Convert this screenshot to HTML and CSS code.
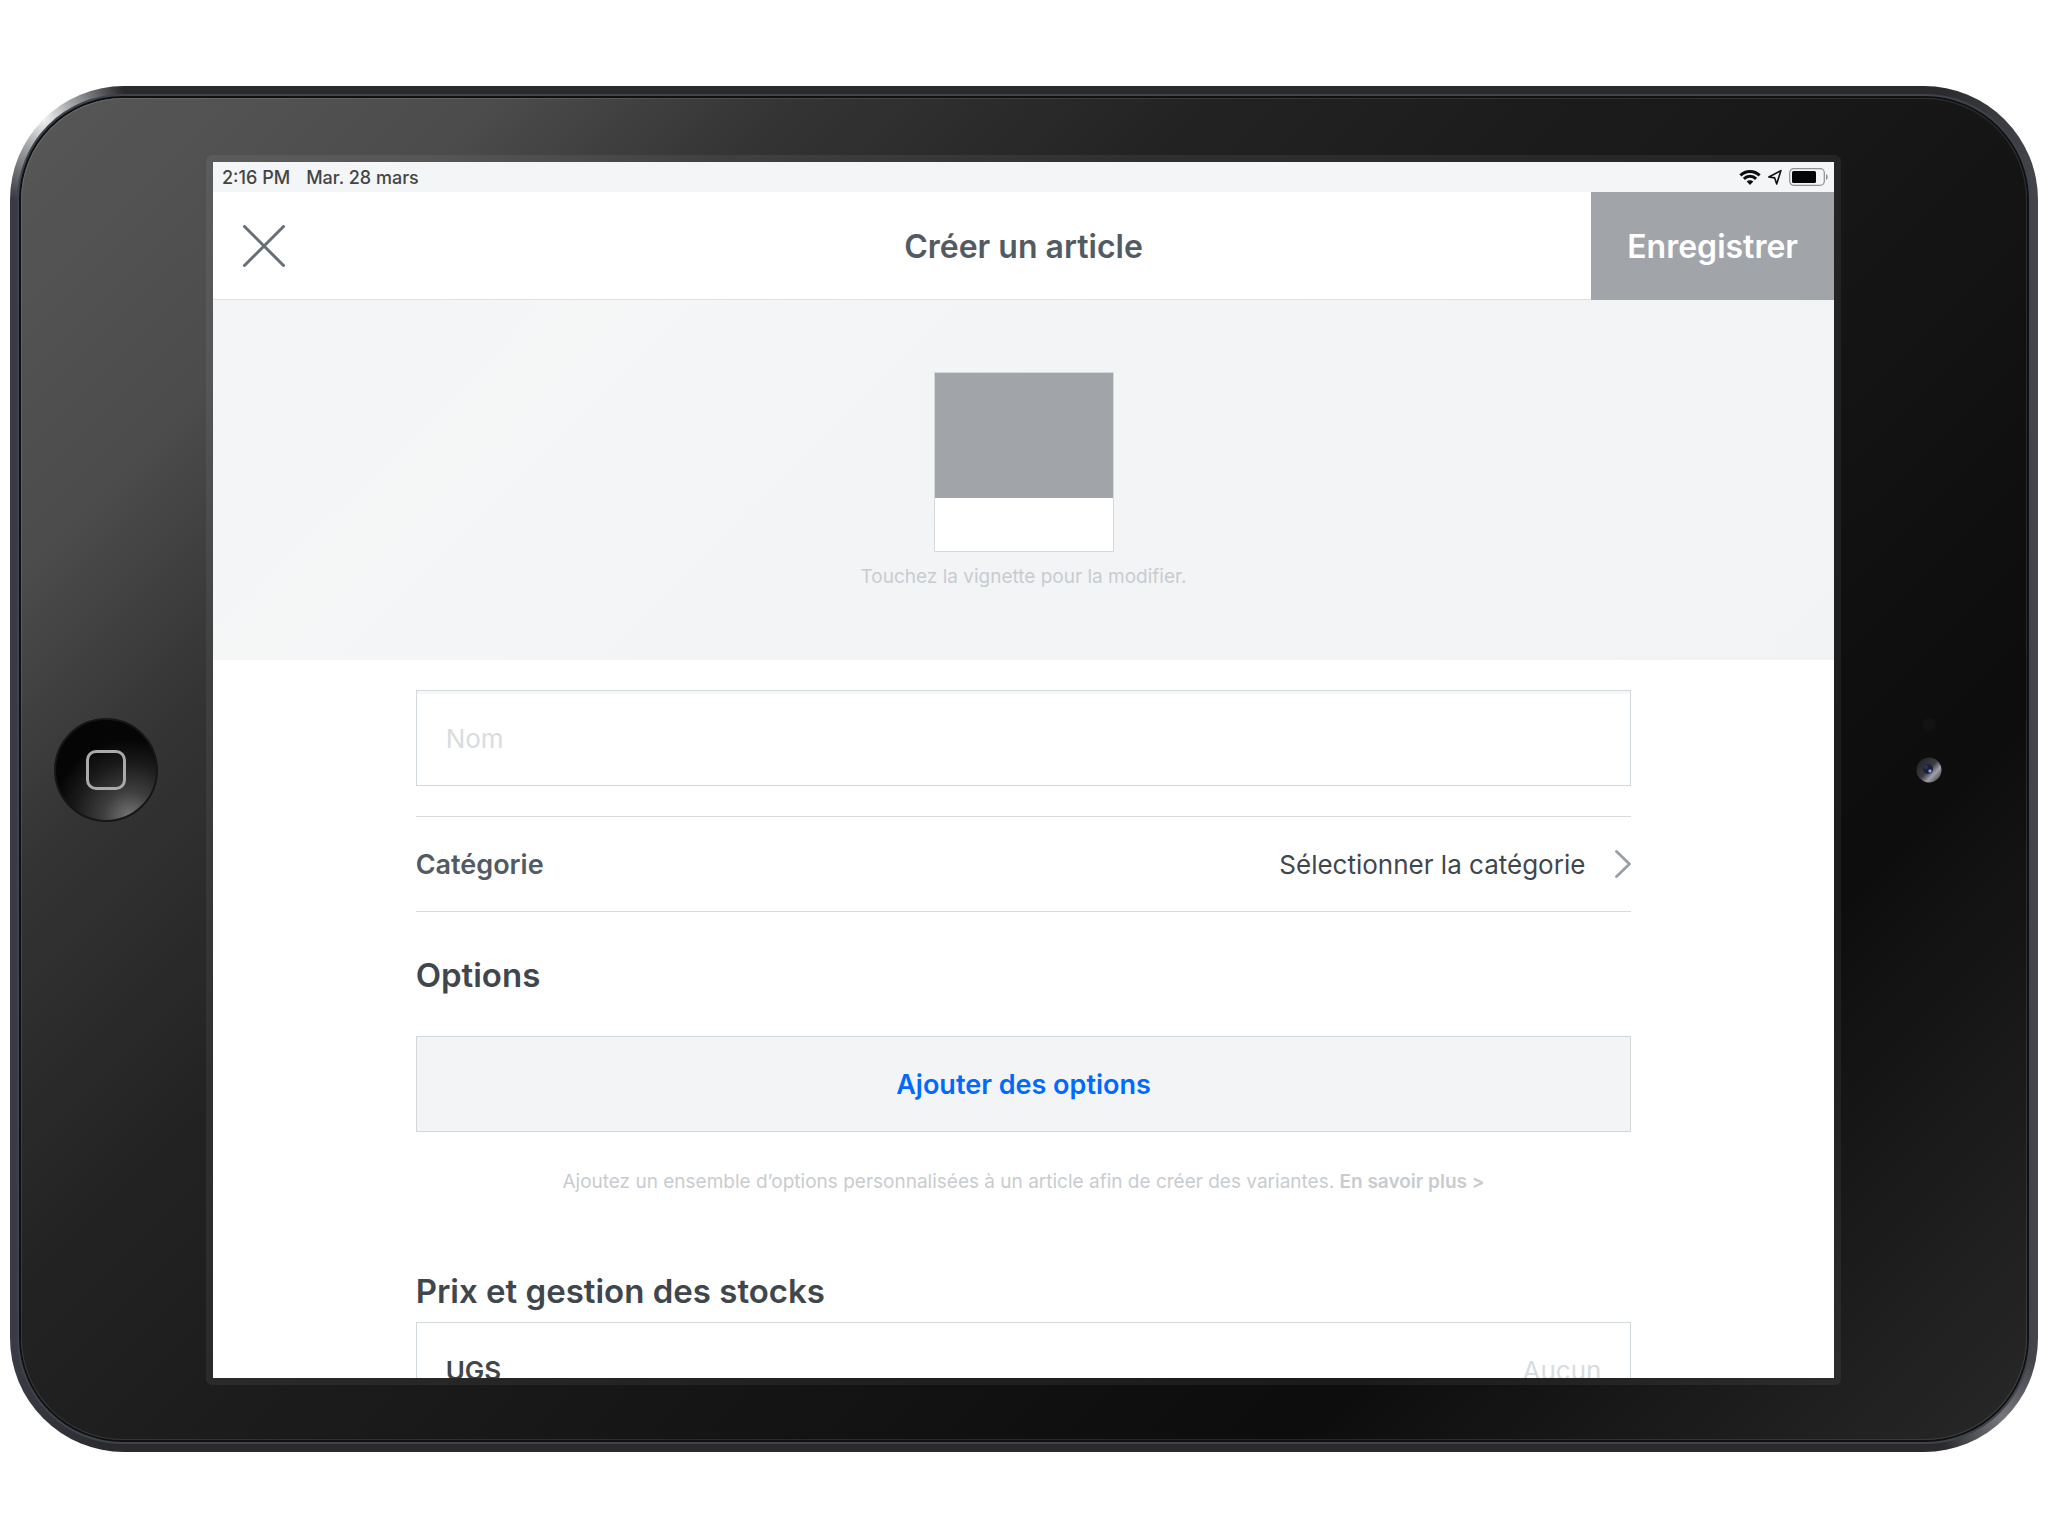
FILE: index.html
```html
<!DOCTYPE html>
<html lang="fr">

<head>
    <meta charset="UTF-8">
    <meta name="viewport" content="width=device-width, initial-scale=1.0">
    <title>Créer un article</title>
    <link rel="stylesheet" href="styles.css">
</head>

<body>

    <div class="tablet">
        <div class="bezel">
            <div class="side side-left">
                <button type="button" class="home" aria-label="Accueil"><span class="home-mark"></span></button>
            </div>

            <div class="screen">
                <div class="status-bar">
                    <div class="status-group">
                        <span>2:16 PM</span>
                        <span>Mar. 28 mars</span>
                    </div>
                    <div class="status-icons">
                        <svg width="22" height="16" viewBox="0 0 22 16" fill="none" stroke="#0b0f10" stroke-width="3">
                            <path d="M1.4 6.4a13.6 13.6 0 0 1 19.2 0" />
                            <path d="M4.9 9.9a8.6 8.6 0 0 1 12.2 0" />
                            <path d="M11 16l-3.3-3.4a4.7 4.7 0 0 1 6.6 0z" fill="#0b0f10" stroke="none" />
                        </svg>
                        <svg width="14" height="16" viewBox="0 0 14 16" fill="none" stroke="#0b0f10" stroke-width="1.6" stroke-linejoin="round">
                            <path d="M12.9 1.6L.9 8l5.8.9 2 6z" />
                        </svg>
                        <svg width="39" height="18" viewBox="0 0 39 18">
                            <rect x=".7" y=".7" width="34.6" height="16.6" rx="4" fill="none" stroke="#8e9193" stroke-width="1.2" />
                            <rect x="3" y="3" width="24" height="12" rx="1.5" fill="#050606" />
                            <path d="M37 6c2.2 1 2.2 5 0 6z" fill="#8e9193" />
                        </svg>
                    </div>
                </div>

                <header class="header">
                    <button type="button" class="close" aria-label="Fermer">
                        <svg width="42" height="42" viewBox="0 0 42 42" fill="none" stroke="#666f76" stroke-width="3" stroke-linecap="round">
                            <path d="M1.5 1.5l39 39M40.5 1.5l-39 39" />
                        </svg>
                    </button>
                    <h1 class="title">Créer un article</h1>
                    <button type="submit" form="article" class="save">Enregistrer</button>
                </header>

                <section class="hero">
                    <button type="button" class="thumbnail" aria-label="Vignette"></button>
                    <p class="note">Touchez la vignette pour la modifier.</p>
                </section>

                <form class="article" id="article">
                    <input type="text" class="name" placeholder="Nom" aria-label="Nom">

                    <button type="button" class="category">
                        <strong>Catégorie</strong>
                        <span class="category-value">
                            Sélectionner la catégorie
                            <svg width="16" height="28" viewBox="0 0 16 28" fill="none" stroke="#9aa0a5" stroke-width="2.8" stroke-linecap="round" stroke-linejoin="round">
                                <path d="M1.5 1.5L14.5 14l-13 12.5" />
                            </svg>
                        </span>
                    </button>

                    <h2 class="options-title">Options</h2>
                    <button type="button" class="add-options">Ajouter des options</button>
                    <p class="note options-note">Ajoutez un ensemble d’options personnalisées à un article afin de créer des variantes. <a href="#">En savoir plus &gt;</a></p>

                    <h2 class="stock-title">Prix et gestion des stocks</h2>
                    <div class="sku-row">
                        <label for="sku">UGS</label>
                        <input type="text" id="sku" class="sku" placeholder="Aucun">
                    </div>
                </form>
            </div>

            <div class="side side-right">
                <!-- light sensor above the front camera -->
                <svg width="26" height="116" viewBox="0 0 26 116">
                    <defs>
                        <linearGradient id="lens" x1="0.1" y1="0.1" x2="0.9" y2="0.85">
                            <stop offset="0" stop-color="#222228" />
                            <stop offset="0.5" stop-color="#3e3c45" />
                            <stop offset="0.75" stop-color="#a09fa8" />
                            <stop offset="1" stop-color="#55545c" />
                        </linearGradient>
                    </defs>
                    <circle cx="13" cy="13" r="7" fill="#121212" />
                    <circle cx="13" cy="58" r="12.5" fill="url(#lens)" />
                    <circle cx="12" cy="57" r="5" fill="#20202e" />
                    <circle cx="10" cy="55" r="2" fill="#27356b" />
                    <circle cx="14" cy="59" r="2" fill="#3d5fc0" />
                    <circle cx="14" cy="59" r="1" fill="#a9c4ff" />
                </svg>
            </div>
        </div>
    </div>

</body>

</html>
```
FILE: styles.css
```css
* {
    box-sizing: border-box;
}

body {
    margin: 0;
    padding: 86px 10px;
    background: #fff;
    font-family: Inter, "Liberation Sans", sans-serif;
    font-size: 26px;
    color: #3f474d;
}

button,
input {
    font: inherit;
    color: inherit;
    border: none;
    border-radius: 0;
    margin: 0;
    padding: 0;
    background: none;
}

button {
    cursor: pointer;
}

h1,
h2,
p {
    margin: 0;
}

/* Tablet */
.tablet {
    padding: 12px 11px;
    border-radius: 114px;
    background:
        radial-gradient(circle at 34px 34px, #f0f0f0 0, #a5a8aa 30px, transparent 84px),
        radial-gradient(circle at calc(100% - 34px) calc(100% - 34px), #77777c 0, transparent 64px),
        linear-gradient(90deg, #3a3b44 0, #2a2a2d 100px, #2a2a2d calc(100% - 100px), #45454c 100%);
}

.bezel {
    display: flex;
    align-items: center;
    padding: 57px 0 55px;
    border-radius: 102px;
    background: linear-gradient(135deg, #575757 0, #4c4c4c 14%, #343434 23%, #222 36%, #1c1c1c 46%, #151515 60%, #101010 70%, #0d0d0d 78%, #1c1c1c 90%, #282828 100%);
    box-shadow: 0 0 0 2px #101012, 0 0 0 4px #3f434d, inset 0 0 0 1px rgba(255, 255, 255, 0.1);
}

.side {
    display: flex;
    justify-content: center;
}

.side-left {
    flex: 0 0 185px;
    padding-right: 16px;
}

.side-right {
    flex: 0 0 186px;
    padding-right: 10px;
}

.home {
    display: flex;
    align-items: center;
    justify-content: center;
    width: 104px;
    height: 104px;
    border: 2px solid #161616;
    border-radius: 50%;
    background: radial-gradient(circle at 74% 98%, #777 0, #3e3e3e 22%, #1a1a1a 45%, #050505 64%);
}

.home-mark {
    width: 40px;
    height: 40px;
    border: 3px solid #aaa;
    border-radius: 10px;
}

/* Screen */
.screen {
    box-sizing: content-box;
    flex: 1;
    min-width: 0;
    aspect-ratio: 4 / 3;
    overflow: hidden;
    border: 7px solid rgba(255, 255, 255, 0.06);
    border-radius: 6px;
    background: #fff padding-box;
}

.status-bar {
    display: flex;
    align-items: center;
    justify-content: space-between;
    height: 30px;
    padding: 0 6px 0 9px;
    background: #f3f5f6;
    font-size: 18px;
    font-weight: 500;
    color: #444;
}

.status-group {
    display: flex;
    gap: 16px;
}

.status-icons {
    display: flex;
    align-items: center;
    gap: 7px;
}

.header {
    display: grid;
    grid-template-columns: 1fr auto 1fr;
    align-items: center;
    height: 108px;
    border-bottom: 1px solid #dfe2e5;
    font-size: 32px;
    font-weight: 600;
}

.close {
    display: flex;
    justify-self: start;
    margin-left: 30px;
}

.title {
    font-size: inherit;
    font-weight: inherit;
    color: #535b62;
}

.save {
    justify-self: end;
    height: 108px;
    padding: 0 36px;
    background: #a1a5a9;
    color: #fff;
}

.hero {
    display: flex;
    flex-direction: column;
    align-items: center;
    height: 360px;
    padding-top: 72px;
    background: linear-gradient(135deg, #f3f5f6 0, #f5f6f6 20%, #f3f4f6 50%, #f2f3f5 100%);
}

.thumbnail {
    width: 180px;
    height: 180px;
    border: 1px solid #d5d9dc;
    background: linear-gradient(#a1a5a9 125px, #fff 125px);
}

.note {
    margin-top: 12px;
    font-size: 19px;
    line-height: 26px;
    text-align: center;
    color: #c8ccd0;
}

/* Form */
.article {
    width: 75%;
    margin: 0 auto;
    padding-top: 30px;
}

.name {
    display: block;
    width: 100%;
    height: 96px;
    padding: 0 29px;
    border: 1px solid #d3d8dc;
    box-shadow: inset 0 3px 0 #f6f7f7;
}

.name::placeholder,
.sku::placeholder {
    color: #d8dce0;
    opacity: 1;
}

.category {
    display: flex;
    align-items: center;
    justify-content: space-between;
    width: 100%;
    height: 96px;
    margin-top: 30px;
    border-top: 1px solid #d7dadd;
    border-bottom: 1px solid #d7dadd;
}

.category strong {
    font-size: 27px;
    font-weight: 600;
    color: #535b62;
}

.category-value {
    display: flex;
    align-items: center;
    gap: 30px;
}

h2 {
    font-size: 33px;
    font-weight: 600;
    line-height: 40px;
}

.options-title {
    margin-top: 43px;
}

.add-options {
    display: block;
    width: 100%;
    height: 96px;
    margin-top: 41px;
    border: 1px solid #d3d8dc;
    background: #f3f4f6;
    font-size: 27px;
    font-weight: 600;
    color: #006aff;
}

.options-note {
    margin-top: 37px;
}

.options-note a {
    font-weight: 600;
    color: inherit;
    text-decoration: none;
}

.stock-title {
    margin-top: 76px;
}

.sku-row {
    display: flex;
    align-items: center;
    justify-content: space-between;
    height: 96px;
    margin-top: 11px;
    padding: 0 29px;
    border: 1px solid #d3d8dc;
}

.sku-row label {
    font-weight: 600;
}

.sku {
    text-align: right;
}
```
